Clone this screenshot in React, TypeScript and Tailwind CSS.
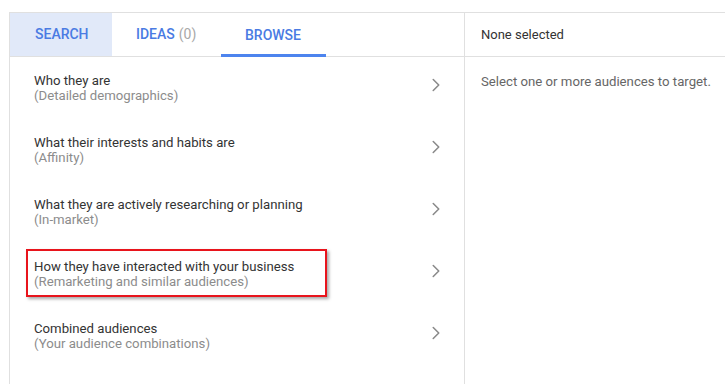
import { ChevronRight } from 'lucide-react';

interface Category {
  title: string;
  hint: string;
  flagged?: boolean;
}

const categories: Category[] = [
  { title: 'Who they are', hint: '(Detailed demographics)' },
  { title: 'What their interests and habits are', hint: '(Affinity)' },
  { title: 'What they are actively researching or planning', hint: '(In-market)' },
  { title: 'How they have interacted with your business', hint: '(Remarketing and similar audiences)', flagged: true },
  { title: 'Combined audiences', hint: '(Your audience combinations)' },
];

function Row({ cat }: { cat: Category }) {
  return (
    <div className="relative h-[62px] flex items-center pl-6 pr-[17px]">
      {/* Annotation box */}
      {cat.flagged && (
        <div className="absolute left-[16px] top-[6px] w-[301px] h-[48px] border-2 border-[#e8141c] shadow-[2px_2px_3px_rgba(0,0,0,0.35)]" />
      )}
      <div className="flex-1 text-[13.2px] leading-[15px] -mt-[1px]">
        <div className="text-[#333333]">{cat.title}</div>
        <div className="text-[#8c8c8c]">{cat.hint}</div>
      </div>
      <ChevronRight className="w-[22px] h-[22px] text-[#8a8a8a] -mt-[6px]" strokeWidth={1.7} />
    </div>
  );
}

export default function App() {
  return (
    <div className="w-[725px] h-[384px] bg-white overflow-hidden pt-[12px] pl-[9px]" style={{ fontFamily: 'Roboto, "Liberation Sans", sans-serif' }}>
      <div className="h-[372px] border-l border-t border-[#e0e0e0] grid grid-cols-[455px_1fr]">
        {/* Left column */}
        <div className="border-r border-[#e0e0e0] flex flex-col">
          <div className="h-[44px] border-b border-[#e0e0e0] flex text-[14px] font-medium uppercase">
            <div className="px-6 flex items-center bg-[#e1e9f9] text-[#4a7be3] w-[102px] pl-[25px]">Search</div>
            <div className="px-6 flex items-center text-[#4a7be3] w-[109px]">
              Ideas <span className="text-[#a8a8a8] font-normal ml-[4px]">(0)</span>
            </div>
            <div className="px-6 flex items-center text-[#4a7be3] w-[105px] border-b-[3px] border-[#4d84ee] pt-[3px] -mb-[1px]">Browse</div>
          </div>
          {categories.map((c) => (
            <Row key={c.title} cat={c} />
          ))}
        </div>

        {/* Right column */}
        <div className="flex flex-col">
          <div className="h-[44px] border-b border-[#e0e0e0] flex items-center pl-4 text-[13px] text-[#333333]">
            None selected
          </div>
          <div className="pl-4 pt-[17px] text-[13.2px] leading-[15px] text-[#666666]">
            Select one or more audiences to target.
          </div>
        </div>
      </div>
    </div>
  );
}
